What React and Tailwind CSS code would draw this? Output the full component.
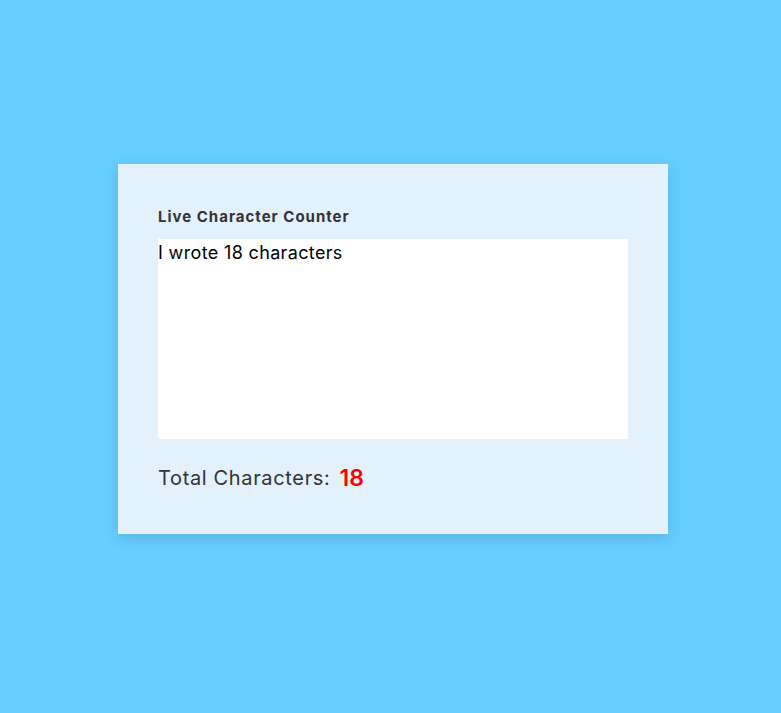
import { useState } from 'react';

export default function App() {
  const [text, setText] = useState('I wrote 18 characters');
  const [count, setCount] = useState(18);

  const handleChange = (e) => {
    setText(e.target.value);
    setCount(e.target.value.length);
  };

  return (
    <div className="min-h-screen w-full bg-[#66cdff] pt-[164px] pl-[118px]" style={{ fontFamily: 'Inter, "Noto Sans", sans-serif' }}>
      <div className="w-[550px] h-[370px] bg-[#e3f1fc] px-10 pt-[41px] shadow-[0_4px_14px_rgba(0,0,0,0.12)]">
        <label htmlFor="counter" className="block text-[15px] font-bold text-[#333] leading-[24px] mb-[10px] tracking-[1px]">
          Live Character Counter
        </label>
        <textarea
          id="counter"
          value={text}
          onChange={handleChange}
          className="block w-[470px] h-[200px] bg-white text-[18px] leading-[27px] text-black p-0 resize-none outline-none border-0 tracking-[0.35px]"
        />
        <div className="flex items-center mt-[24px] h-[30px]">
          <span className="text-[20px] text-[#333] font-normal tracking-[0.65px]">Total Characters:</span>
          <span className="ml-[9px] text-[23px] font-semibold text-[#ff0000]">{count}</span>
        </div>
      </div>
    </div>
  );
}
